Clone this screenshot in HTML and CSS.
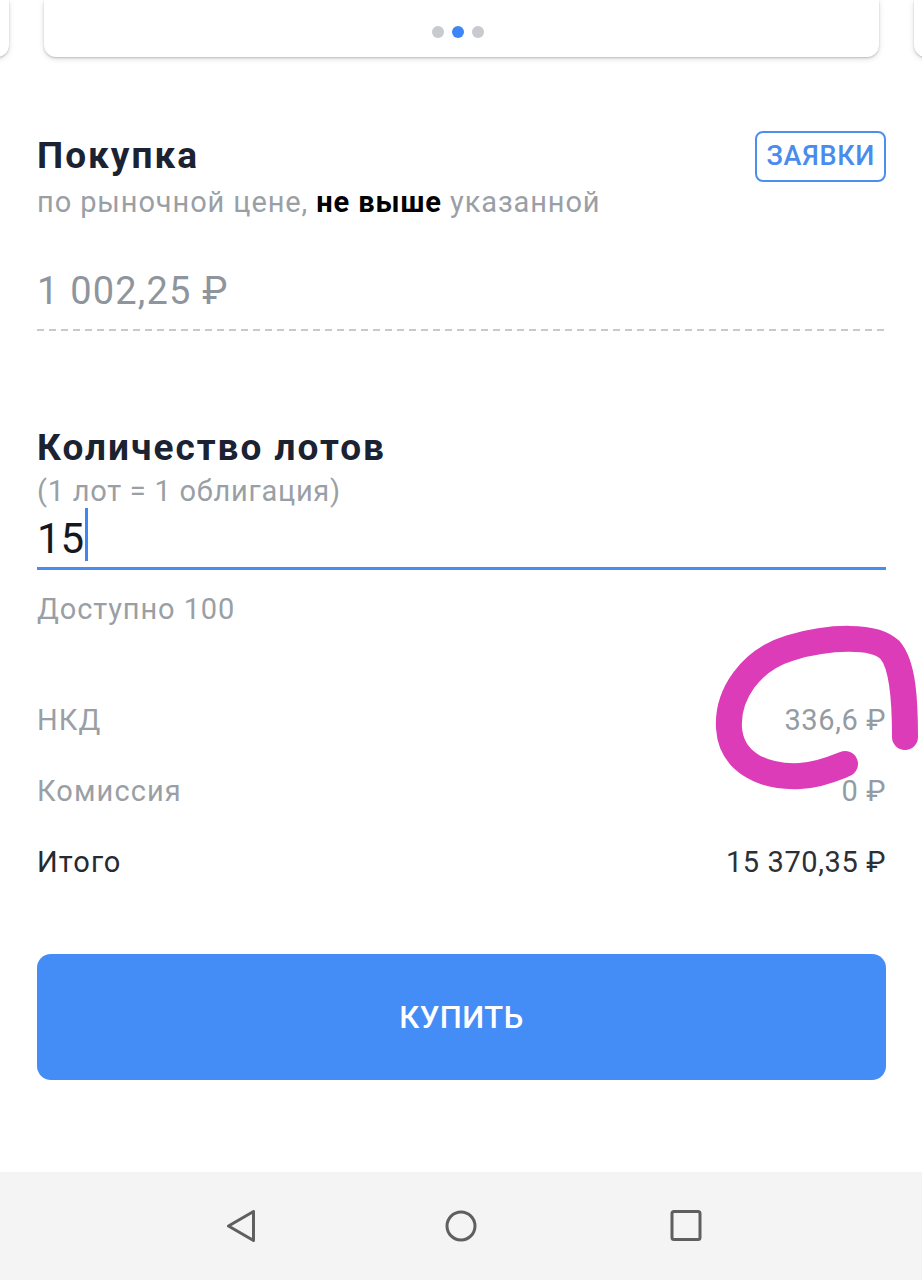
FILE: index.html
```html
<!DOCTYPE html>
<html lang="ru">
<head>
<meta charset="utf-8">
<title>Покупка</title>
<link rel="stylesheet" href="styles.css">
</head>
<body>
<div class="screen">
  <div class="carousel">
    <div class="card"></div>
    <div class="card card-main">
      <div class="dots"><span class="dot"></span><span class="dot dot-active"></span><span class="dot"></span></div>
    </div>
    <div class="card"></div>
  </div>

  <main class="content">
    <section class="order-head">
      <div class="head-text">
        <h1 class="title">Покупка</h1>
        <p class="sub">по рыночной цене, <b class="sub-strong">не выше</b> указанной</p>
      </div>
      <button class="orders-btn">ЗАЯВКИ</button>
    </section>

    <div class="price-field">1 002,25 ₽</div>

    <section class="lots">
      <h2 class="title title-lots">Количество лотов</h2>
      <p class="hint">(1 лот = 1 облигация)</p>
      <div class="lots-input"><span class="lots-value">15</span><i class="caret"></i></div>
      <p class="avail">Доступно 100</p>
    </section>

    <div class="summary">
      <div class="row"><span class="label">НКД</span><span class="value">336,6 ₽</span></div>
      <div class="row"><span class="label">Комиссия</span><span class="value">0 ₽</span></div>
      <div class="row row-total"><span class="label">Итого</span><span class="value">15 370,35 ₽</span></div>
    </div>

    <button class="buy-btn">КУПИТЬ</button>
  </main>

  <nav class="sysnav">
    <svg class="nav-icon" viewBox="0 0 32 32" width="32" height="32"><path d="M4.5 16 L29.5 1.5 L29.5 30.5 Z" fill="none" stroke="#5f5f5f" stroke-width="3" stroke-linejoin="round"/></svg>
    <svg class="nav-icon" viewBox="0 0 32 32" width="32" height="32"><circle cx="16" cy="16" r="14" fill="none" stroke="#5f5f5f" stroke-width="3"/></svg>
    <svg class="nav-icon nav-icon-last" viewBox="0 0 32 32" width="32" height="32"><rect x="2" y="1.5" width="28" height="28" rx="2" fill="none" stroke="#5f5f5f" stroke-width="3"/></svg>
  </nav>

  <svg class="scribble" viewBox="0 0 922 1280" width="922" height="1280">
    <path d="M905 737 C905 700 903 665 890 650 C875 635 830 636 790 648 C750 660 727 695 729 728 C731 760 760 778 800 776 C820 775 835 768 845 764" fill="none" stroke="#dc3cb8" stroke-width="26" stroke-linecap="round" stroke-linejoin="round"/>
  </svg>
</div>
</body>
</html>
```
FILE: styles.css
```css
* { box-sizing: border-box; }
html, body { margin: 0; padding: 0; background: #fff; }
body { font-family: "Roboto", "Noto Sans", "Liberation Sans", sans-serif; }

.screen {
  position: relative;
  width: 922px;
  height: 1280px;
  display: flex;
  flex-direction: column;
  overflow: hidden;
}

/* carousel */
.carousel {
  height: 64px;
  display: flex;
  justify-content: center;
  gap: 35px;
  flex: none;
}
.card {
  flex: none;
  width: 835px;
  height: 57px;
  background: #fff;
  border-radius: 0 0 12px 12px;
  box-shadow: 0 1px 2px rgba(0,0,0,0.2), 0 2px 6px rgba(0,0,0,0.12);
}
.card-main {
  display: flex;
  align-items: flex-end;
  justify-content: center;
  padding-bottom: 19px;
}
.dots { display: flex; gap: 8px; margin-left: -7px; }
.dot { width: 12px; height: 12px; border-radius: 50%; background: #c7cacf; }
.dot-active { background: #3d86f5; }

/* content */
.content {
  flex: 1;
  padding: 0 36px 0 37px;
  display: flex;
  flex-direction: column;
}
.order-head {
  margin-top: 67px;
  display: flex;
  justify-content: space-between;
  align-items: flex-start;
}
.head-text { padding-top: 4px; }
.title {
  margin: 0;
  font-size: 37px;
  line-height: 42px;
  font-weight: 700;
  letter-spacing: 2px;
  color: #1b2231;
}
.sub {
  margin: 8px 0 0;
  font-size: 29px;
  line-height: 34px;
  letter-spacing: 0.9px;
  color: #9a9fa6;
}
.sub-strong { color: #000; font-weight: 700; }

.orders-btn {
  height: 51px;
  padding: 0 9px;
  border: 2px solid #4d8fee;
  border-radius: 8px;
  background: #fff;
  color: #4a8cee;
  font-family: inherit;
  font-size: 27px;
  font-weight: 500;
  letter-spacing: 0.7px;
  line-height: 47px;
}

.price-field {
  margin-top: 50px;
  font-size: 38px;
  line-height: 44px;
  letter-spacing: 1.2px;
  color: #8e959d;
  background-image: repeating-linear-gradient(to right, #c6cacf 0 7px, transparent 7px 12px);
  background-size: 100% 2px;
  background-position: left bottom;
  background-repeat: no-repeat;
  padding-bottom: 18px;
}

.lots { margin-top: 96px; }
.hint {
  margin: 5px 0 0;
  font-size: 29px;
  line-height: 34px;
  letter-spacing: 0.75px;
  color: #9a9fa6;
}
.lots-input {
  height: 62px;
  display: flex;
  align-items: flex-start;
  border-bottom: 3px solid #4a8cee;
}
.lots-value {
  margin-top: 4px;
  font-size: 42px;
  line-height: 54px;
  color: #15191f;
}
.caret {
  width: 3px;
  height: 53px;
  margin-left: 1px;
  background: #3d86f5;
}
.avail {
  margin: 22px 0 0;
  font-size: 29px;
  line-height: 34px;
  letter-spacing: 0.9px;
  color: #9a9fa6;
}

.summary {
  margin-top: 77px;
  display: flex;
  flex-direction: column;
  gap: 37px;
}
.row {
  display: flex;
  justify-content: space-between;
  font-size: 29px;
  line-height: 34px;
  color: #9a9fa6;
}
.row .label { letter-spacing: 1.1px; }
.row .value { letter-spacing: 0.6px; color: #959ba3; }
.row-total .label { color: #262a31; }
.row-total .value { color: #2b3037; }

.buy-btn {
  margin-top: 75px;
  height: 126px;
  border: none;
  border-radius: 14px;
  background: #448cf6;
  color: #fff;
  font-family: inherit;
  font-size: 31px;
  font-weight: 500;
  letter-spacing: 0.5px;
}

/* system nav */
.sysnav {
  flex: none;
  height: 108px;
  background: #f4f4f4;
  display: flex;
  justify-content: flex-start;
  align-items: center;
  gap: 189px;
  padding-left: 224px;
}
.nav-icon { display: block; }
.nav-icon-last { margin-left: 4px; }

/* annotation drawn over the screenshot */
.scribble {
  position: absolute;
  left: 0;
  top: 0;
  pointer-events: none;
}
```
